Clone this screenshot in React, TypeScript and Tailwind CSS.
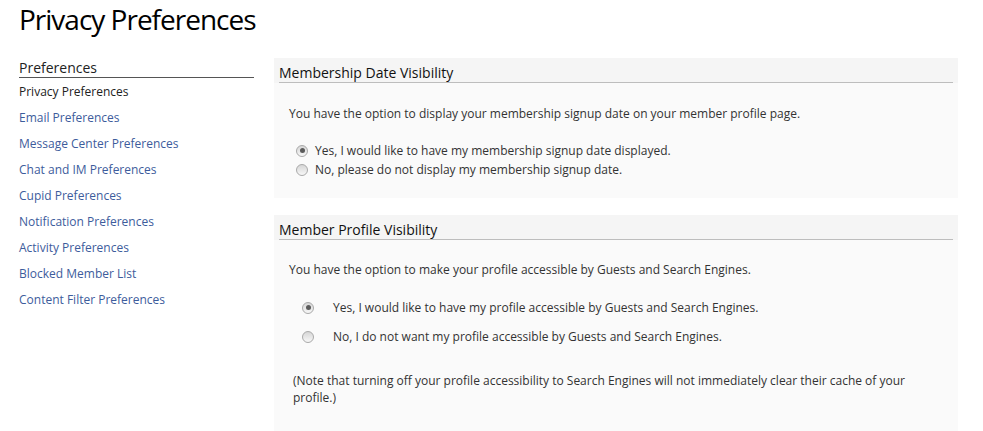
const links = [
  'Email Preferences',
  'Message Center Preferences',
  'Chat and IM Preferences',
  'Cupid Preferences',
  'Notification Preferences',
  'Activity Preferences',
  'Blocked Member List',
  'Content Filter Preferences',
];

function Radio({ checked }: { checked?: boolean }) {
  return (
    <span className="flex h-[12px] w-[12px] shrink-0 items-center justify-center rounded-full border border-[#a9a9a9] bg-gradient-to-b from-[#d6d6d6] to-[#f7f7f7]">
      {checked && <span className="h-[5px] w-[5px] rounded-full bg-[#5a5a5a]" />}
    </span>
  );
}

function Panel({ title, children }: { title: string; children: React.ReactNode }) {
  return (
    <section className="bg-[#fafafa]">
      <div className="bg-[#f5f5f5] px-[5px] pt-[5px]">
        <h2 className="border-b border-[#bdbdbd] text-[14px] leading-[19px] font-medium text-[#111]">{title}</h2>
      </div>
      {children}
    </section>
  );
}

export default function App() {
  return (
    <div className="min-h-[431px] bg-white pl-[19px] font-['Open_Sans',sans-serif] text-[#333]">
      <h1 className="h-[38px] text-[28px] leading-[38px] tracking-[-1px] text-black">Privacy Preferences</h1>

      <div className="mt-[20px] flex gap-[20px]">
        <nav className="w-[235px] shrink-0">
          <h3 className="border-b border-[#555] text-[14px] leading-[19px] text-[#222]">Preferences</h3>
          <ul className="pt-[1px] text-[12px] leading-[26px]">
            <li className="text-[#222]">Privacy Preferences</li>
            {links.map((l) => (
              <li key={l}>
                <a href="#" className="text-[#3d5c9c]">{l}</a>
              </li>
            ))}
          </ul>
        </nav>

        <main className="flex w-[684px] flex-col gap-[17px] text-[12px] leading-[17px]">
          <Panel title="Membership Date Visibility">
            <div className="pt-[22px] pb-[19px] pl-[15px]">
              <p>You have the option to display your membership signup date on your member profile page.</p>
              <div className="mt-[19px] leading-[19px]">
                <label className="flex items-center gap-[7px] pl-[7px]">
                  <Radio checked />
                  <span>Yes, I would like to have my membership signup date displayed.</span>
                </label>
                <label className="flex items-center gap-[7px] pl-[7px]">
                  <Radio />
                  <span>No, please do not display my membership signup date.</span>
                </label>
              </div>
            </div>
          </Panel>

          <Panel title="Member Profile Visibility">
            <div className="pt-[21px] pb-[30px] pl-[15px]">
              <p>You have the option to make your profile accessible by Guests and Search Engines.</p>
              <div className="mt-[15px]">
                <label className="flex items-center py-[6px] pl-[13px]">
                  <Radio checked />
                  <span className="pl-[19px]">Yes, I would like to have my profile accessible by Guests and Search Engines.</span>
                </label>
                <label className="flex items-center py-[6px] pl-[13px]">
                  <Radio />
                  <span className="pl-[19px]">No, I do not want my profile accessible by Guests and Search Engines.</span>
                </label>
              </div>
              <p className="mt-[21px] mr-[34px] pl-[4px]">
                (Note that turning off your profile accessibility to Search Engines will not immediately clear their cache of your profile.)
              </p>
            </div>
          </Panel>
        </main>
      </div>
    </div>
  );
}
